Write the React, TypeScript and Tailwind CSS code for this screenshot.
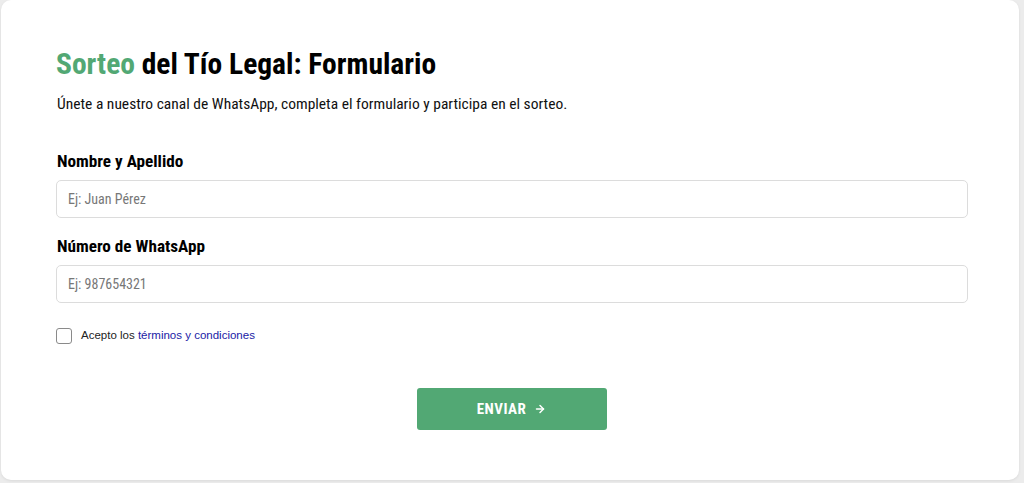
import { ArrowRight } from 'lucide-react';

const condensed = {
  fontFamily: '"Roboto Condensed", Roboto, "Liberation Sans", sans-serif',
  fontStretch: 'condensed',
} as const;

export default function App() {
  return (
    <div className="min-h-[483px] bg-[#ececec] pl-[1px] pb-[3px]">
      <div
        className="w-[1018px] h-[480px] rounded-[10px] bg-white shadow-[0_1px_3px_rgba(0,0,0,0.08)] pl-[55px] pr-[51px] pt-[45px]"
        style={condensed}
      >
        <h1 className="text-[29.5px] font-bold leading-[38px] text-black">
          <span className="text-[#52a874]">Sorteo</span> del Tío Legal: Formulario
        </h1>
        <p className="mt-[11px] pl-[1px] text-[15.5px] leading-[20px] text-[#111]">
          Únete a nuestro canal de WhatsApp, completa el formulario y participa en el sorteo.
        </p>

        <form className="mt-[37px]" onSubmit={(e) => e.preventDefault()}>
          <label className="block pl-[1px] text-[17.2px] font-bold leading-[20px] text-black">
            Nombre y Apellido
          </label>
          <input
            type="text"
            placeholder="Ej: Juan Pérez"
            className="mt-[9px] block w-full h-[38px] rounded-[5px] border border-[#dcdcdc] px-[11px] text-[14px] placeholder:text-[#777] outline-none"
            style={condensed}
          />

          <label className="mt-[18px] block pl-[1px] text-[17.2px] font-bold leading-[20px] text-black">
            Número de WhatsApp
          </label>
          <input
            type="text"
            placeholder="Ej: 987654321"
            className="mt-[9px] block w-full h-[38px] rounded-[5px] border border-[#dcdcdc] px-[11px] text-[14px] placeholder:text-[#777] outline-none"
            style={condensed}
          />

          <div
            className="mt-[24px] flex items-center gap-[9px] text-[11.5px] text-[#222]"
            style={{ fontFamily: '"Liberation Sans", Arial, sans-serif' }}
          >
            <span className="inline-block w-[16px] h-[16px] rounded-[3px] border border-[#8a8a8a] bg-white" />
            <span>
              Acepto los <a href="#" className="text-[#1a1aa6]">términos y condiciones</a>
            </span>
          </div>

          <div className="mt-[44px] flex justify-center">
            <button
              type="submit"
              className="ml-[-1px] w-[190px] h-[42px] rounded-[3px] bg-[#52a874] text-white text-[15px] font-bold tracking-[0.5px] flex items-center justify-center gap-[8px]"
              style={condensed}
            >
              ENVIAR <ArrowRight className="w-[12px] h-[12px]" strokeWidth={3} />
            </button>
          </div>
        </form>
      </div>
    </div>
  );
}
